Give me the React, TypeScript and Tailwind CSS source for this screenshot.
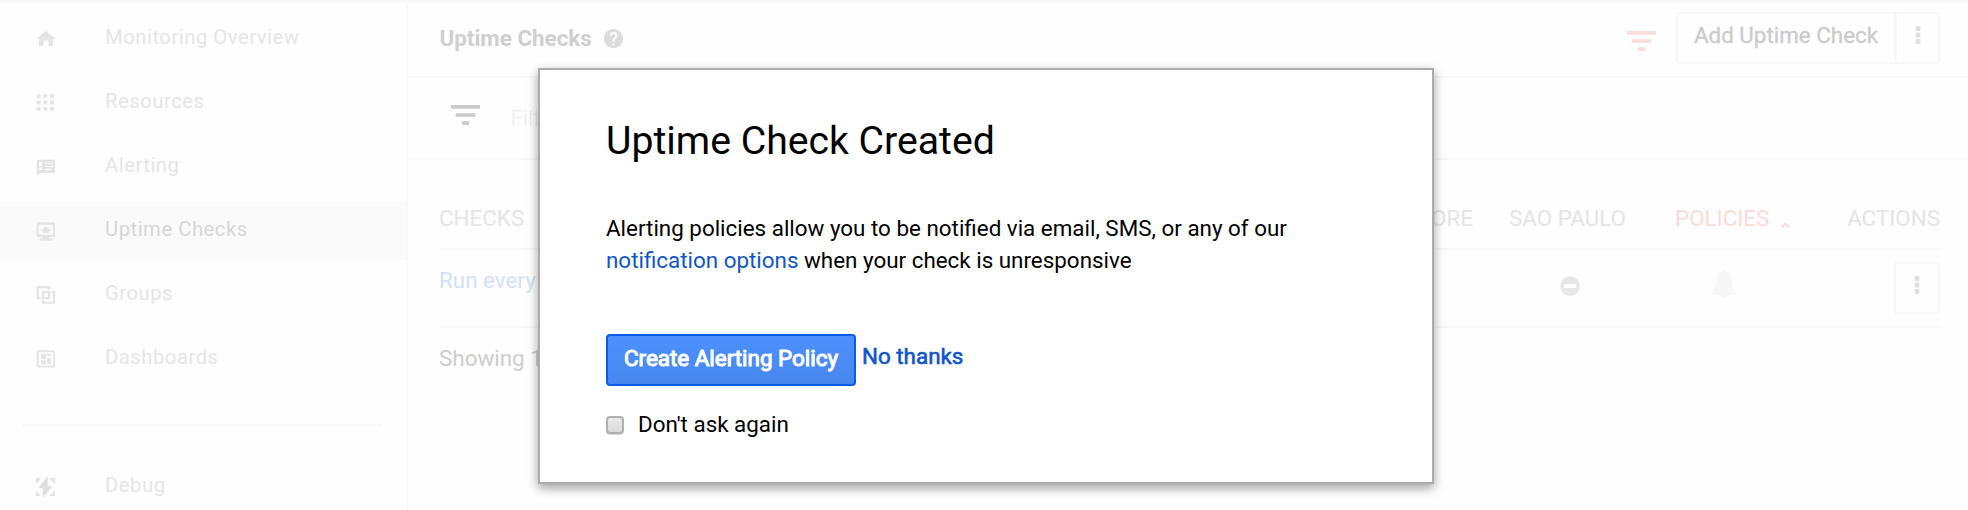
import type { ReactNode } from "react";
import { MdHelp } from "react-icons/md";

function Icon({ children, className = "" }: { children: ReactNode; className?: string }) {
  return (
    <svg width="24" height="24" viewBox="0 0 24 24" fill="currentColor" className={`shrink-0 text-[#e4e4e4] ${className}`}>
      {children}
    </svg>
  );
}

const HomeIcon = () => (
  <Icon>
    <path d="M12 3.7 2.2 11.9H5V19h4.6v-5.4h4.8V19H19v-7.1h2.8z" />
  </Icon>
);

const GridIcon = () => (
  <Icon>
    {[3.3, 9.7, 16].map((y) => [2.7, 9.3, 16].map((x) => <rect key={`${x}-${y}`} x={x} y={y} width="4" height="3.6" />))}
  </Icon>
);

const AlertIcon = () => (
  <Icon>
    <path
      fillRule="evenodd"
      d="M4.2 4.7h15.3q1.5 0 1.5 1.5v10.3q0 1.5-1.5 1.5H6l-3.3 3V6.2q0-1.5 1.5-1.5zM5 7v4.6h3V7zM5 12.6V15h3v-2.4zM11 7.7v1h8v-1zM11 10.9v1h8v-1zM11 14v1h6v-1z"
    />
  </Icon>
);

const MonitorIcon = () => (
  <Icon>
    <path
      fillRule="evenodd"
      d="M3.4 3.3h16.9q.7 0 .7.7v13.3q0 .7-.7.7H15v1.2h2.7q1 0 1 1v1.5H5.3v-1.5q0-1 1-1H9V18H3.4q-.7 0-.7-.7V4q0-.7.7-.7zM4.7 5.7v10H19v-10z"
    />
    <path d="M12 7.4 6.7 11.7H9V14h6v-2.3h2.3z" />
  </Icon>
);

const GroupsIcon = () => (
  <Icon>
    <path
      fill="none"
      stroke="currentColor"
      strokeWidth="2.1"
      d="M15.2 7V4.1H3.7v11h3M17.2 9H20v10.7H9V17M9.1 9.1h5.9v5.9H9.1z"
    />
  </Icon>
);

const DashboardIcon = () => (
  <Icon>
    <rect x="3.7" y="4.3" width="16.4" height="15.2" rx=".8" fill="none" stroke="currentColor" strokeWidth="2" />
    <path d="M7 7h5v5H7zM13 7h4.2v2H13zM7 13.2h5v4H7zM13 11h4.2v6.2H13z" />
  </Icon>
);

const DebugIcon = () => (
  <Icon>
    <path fill="#dfdfdf" d="M13.7.8V11h4.8L9 22.8v-9.5H4.3z" />
    <path d="M1.8 3h4.6v2L4 6.2V8H1.8zM16 3h5v5h-2.2V6.2L16 5zM1.8 16.2H4v2.3l2.4 1V21H1.8zM18.8 16.2H21V21h-5v-1.6l2.8-1z" />
  </Icon>
);

function NavItem({ icon, label, active = false }: { icon: ReactNode; label: string; active?: boolean }) {
  return (
    <a className={`mb-1.5 flex h-[58px] items-center gap-[47px] pl-[34px] ${active ? "bg-[#fafafa] text-[#d6d6d6]" : "text-[#e5e5e5]"}`}>
      {icon}
      <span className="pb-1 text-[20.3px] tracking-[0.5px]">{label}</span>
    </a>
  );
}

function FilterBars({ className }: { className: string }) {
  return (
    <svg viewBox="0 0 29 20" preserveAspectRatio="none" fill="currentColor" className={className}>
      <rect x="0" y="0" width="29" height="3.7" />
      <rect x="4.7" y="8.2" width="19.6" height="3.6" />
      <rect x="11" y="16.2" width="7" height="3.7" />
    </svg>
  );
}

function Dots() {
  return (
    <svg width="6" height="18" viewBox="0 0 6 18" fill="#dedede">
      <rect x=".7" y="0" width="4.6" height="5" rx="1.2" />
      <rect x=".7" y="6.5" width="4.6" height="5" rx="1.2" />
      <rect x=".7" y="13" width="4.6" height="5" rx="1.2" />
    </svg>
  );
}

function Sidebar() {
  return (
    <nav className="w-[408px] shrink-0 border-r-2 border-[#f8f8f8] pt-2.5">
      <NavItem icon={<HomeIcon />} label="Monitoring Overview" />
      <NavItem icon={<GridIcon />} label="Resources" />
      <NavItem icon={<AlertIcon />} label="Alerting" />
      <NavItem icon={<MonitorIcon />} label="Uptime Checks" active />
      <NavItem icon={<GroupsIcon />} label="Groups" />
      <NavItem icon={<DashboardIcon />} label="Dashboards" />
      <hr className="mt-9 mr-6 mb-8 ml-[22px] border-t-2 border-[#f7f7f7]" />
      <NavItem icon={<DebugIcon />} label="Debug" />
    </nav>
  );
}

function Toolbar() {
  return (
    <header className="flex h-[78px] shrink-0 items-center border-b-2 border-[#f8f8f8] pr-7 pl-[31.5px]">
      <h1 className="pt-0.5 text-[22.4px] font-bold text-[#cfcfcf]">Uptime Checks</h1>
      <MdHelp size={23} className="ml-2.5 text-[#dcdcdc]" />
      <FilterBars className="mt-1.5 ml-auto h-5 w-[29px] text-[#fbdcd9]" />
      <div className="ml-5 flex h-[52px] overflow-hidden rounded border-2 border-[#f7f7f7] text-[#cbcbcb]">
        <button className="w-[216px] pb-1 text-[22.4px] [-webkit-text-stroke:0.3px_#cbcbcb]">Add Uptime Check</button>
        <button className="flex w-[44px] justify-center border-l-[3px] border-[#f7f7f7] pt-3">
          <Dots />
        </button>
      </div>
    </header>
  );
}

function CheckTable() {
  return (
    <section className="mx-7 ml-8 text-[22.4px]">
      <div className="flex h-[90px] items-end border-b-2 border-[#f7f7f7] pb-[17px] leading-[26px] text-[#e4e4e4]">
        <span className="-ml-px flex-1">CHECKS</span>
        <span>SINGAPORE</span>
        <span className="w-[187px] pl-0.5 text-center">SAO PAULO</span>
        <span className="flex w-[130px] items-end pl-[15px] text-[#fadbd8]">
          POLICIES
          <svg width="9" height="6" viewBox="0 0 9 6" fill="none" stroke="currentColor" strokeWidth="2" className="mb-[3px] ml-3 shrink-0">
            <path d="M1 5.3 4.5 1.5 8 5.3" />
          </svg>
        </span>
        <span className="w-[150px] text-right">ACTIONS</span>
      </div>
      <div className="flex h-[78px] items-center border-b-2 border-[#f7f7f7]">
        <a className="-ml-px flex-1 pb-[15px] text-[#d2e0f8]">Run every</a>
        <span className="flex w-[187px] justify-center pb-1 pl-1.5">
          <svg width="20" height="20" viewBox="0 0 20 20">
            <circle cx="10" cy="10" r="9.8" fill="#e7e7e7" />
            <rect x="4" y="8" width="12" height="4" rx="1" fill="#fefefe" />
          </svg>
        </span>
        <span className="flex w-[130px] justify-center pr-0.5 pb-2">
          <svg width="26" height="29" viewBox="0 0 26 29" fill="#f7f7f7">
            <path d="M13 0c1 0 1.5.7 1.6 1.7C18.6 2.4 20.4 5.5 20.6 9.600c.3 7.200 1.600 10.400 4.800 13 1 .9.4 2.200-.9 2.200h-7.400c-.3 2.300-1.900 3.700-4.100 3.700s-3.800-1.400-4.100-3.700H1.500c-1.300 0-1.900-1.300-.9-2.200 3.200-2.600 4.500-5.800 4.800-13 .2-4.100 2-7.200 6-7.900C11.500.7 12 0 13 0z" />
          </svg>
        </span>
        <span className="flex w-[150px] justify-end">
          <button className="flex h-[52px] w-[46px] justify-center rounded-r border-2 border-[#f7f7f7] pt-3">
            <Dots />
          </button>
        </span>
      </div>
      <p className="-ml-px pt-[17px] leading-[26px] text-[#cdcdcd]">Showing 1</p>
    </section>
  );
}

function Modal() {
  return (
    <div
      role="dialog"
      className="absolute top-[68px] left-[538px] flex h-[416px] w-[896px] flex-col border-2 border-[#acacac] bg-white px-[66px] pt-[46px] text-[22.4px] leading-[32px] text-black shadow-[0_4px_10px_rgba(0,0,0,0.38)]"
    >
      <h2 className="text-[39.2px] leading-[50px]">Uptime Check Created</h2>
      <p className="mt-[46px] whitespace-nowrap">
        Alerting policies allow you to be notified via email, SMS, or any of our
        <br />
        <a className="text-[#1155cc]">notification options</a> when your check is unresponsive
      </p>
      <div className="mt-[58px] flex gap-1.5">
        <button className="h-[52px] w-[250px] shrink-0 rounded border-2 border-[#0a5be6] bg-linear-to-b from-[#4d90fe] to-[#4787ed] pb-1 text-white [-webkit-text-stroke:1px_white]">
          Create Alerting Policy
        </button>
        <a className="pt-[6px] text-[#1155cc] [-webkit-text-stroke:0.6px_#1155cc]">No thanks</a>
      </div>
      <label className="mt-[22px] flex items-center gap-3.5">
        <span
          role="checkbox"
          aria-checked="false"
          className="mt-0.5 size-[18px] rounded border-2 border-[#b0b0b0] bg-linear-to-b from-[#eaeaea] to-[#dadada] shadow-[0_1px_1px_rgba(0,0,0,0.15)]"
        />
        Don't ask again
      </label>
    </div>
  );
}

export default function App() {
  return (
    <div className="relative flex h-[510px] w-[1968px] overflow-hidden bg-[#fefefe] font-['Roboto',sans-serif]">
      <div className="absolute inset-x-0 top-0 h-1 bg-linear-to-b from-[#f9f9f9] from-60% to-[#fdfdfd]" />
      <Sidebar />
      <main className="flex min-w-0 flex-1 flex-col">
        <Toolbar />
        <div className="flex h-[82px] shrink-0 items-center gap-[31px] border-b-2 border-[#f8f8f8] pl-[42.5px]">
          <FilterBars className="mb-1.5 h-5 w-[29px] text-[#cbcbcb]" />
          <span className="pt-0.5 text-[22.4px] font-light text-[#ececec]">Filter</span>
        </div>
        <CheckTable />
      </main>
      <Modal />
    </div>
  );
}
